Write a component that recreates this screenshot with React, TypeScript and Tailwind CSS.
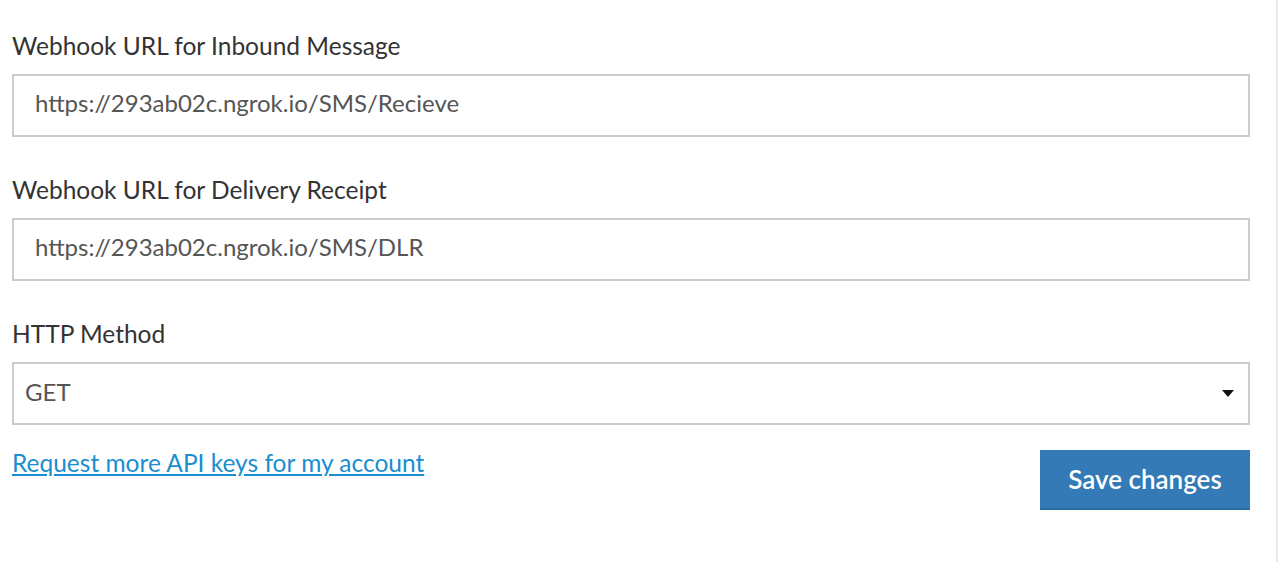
import React from "react"

const font = { fontFamily: "Lato, 'Open Sans', sans-serif" }

function Field({ label, value }: { label: string; value: string }) {
  return (
    <div className="flex flex-col">
      <label className="text-[24.5px] leading-[30px] text-[#333]">{label}</label>
      <input
        readOnly
        value={value}
        className="mt-[13px] h-[63px] w-full border-2 border-[#cccccc] bg-white px-[21px] pb-[6px] text-[24px] text-[#555] outline-none"
        style={font}
      />
    </div>
  )
}

export default function App() {
  return (
    <div className="h-[562px] w-[1278px] bg-white" style={font}>
      <div className="flex h-full w-[1278px] flex-col border-r-2 border-[#e8e8e8] pl-3 pr-[26px] pt-[31px]">
        <Field label="Webhook URL for Inbound Message" value="https://293ab02c.ngrok.io/SMS/Recieve" />
        <div className="mt-[38px]">
          <Field label="Webhook URL for Delivery Receipt" value="https://293ab02c.ngrok.io/SMS/DLR" />
        </div>
        <div className="mt-[38px] flex flex-col">
          <label className="text-[24.5px] leading-[30px] text-[#333]">HTTP Method</label>
          <div className="mt-[13px] flex h-[63px] w-full items-center justify-between border-2 border-[#cccccc] bg-white pb-[4px] pl-[11px] pr-[14px]">
            <span className="text-[24px] text-[#555]">GET</span>
            <svg width="12" height="7" viewBox="0 0 12 7" className="mt-[4px]">
              <path d="M0 0h12L6 7z" fill="#111" />
            </svg>
          </div>
        </div>
        <div className="mt-[25px] flex items-start justify-between">
          <a href="#" className="text-[24.5px] leading-[26px] text-[#1a8ed1] underline">
            Request more API keys for my account
          </a>
          <button className="h-[60px] w-[210px] border-b-2 border-[#2e6da4] bg-[#337ab7] text-[26px] font-semibold text-white">
            Save changes
          </button>
        </div>
      </div>
    </div>
  )
}
